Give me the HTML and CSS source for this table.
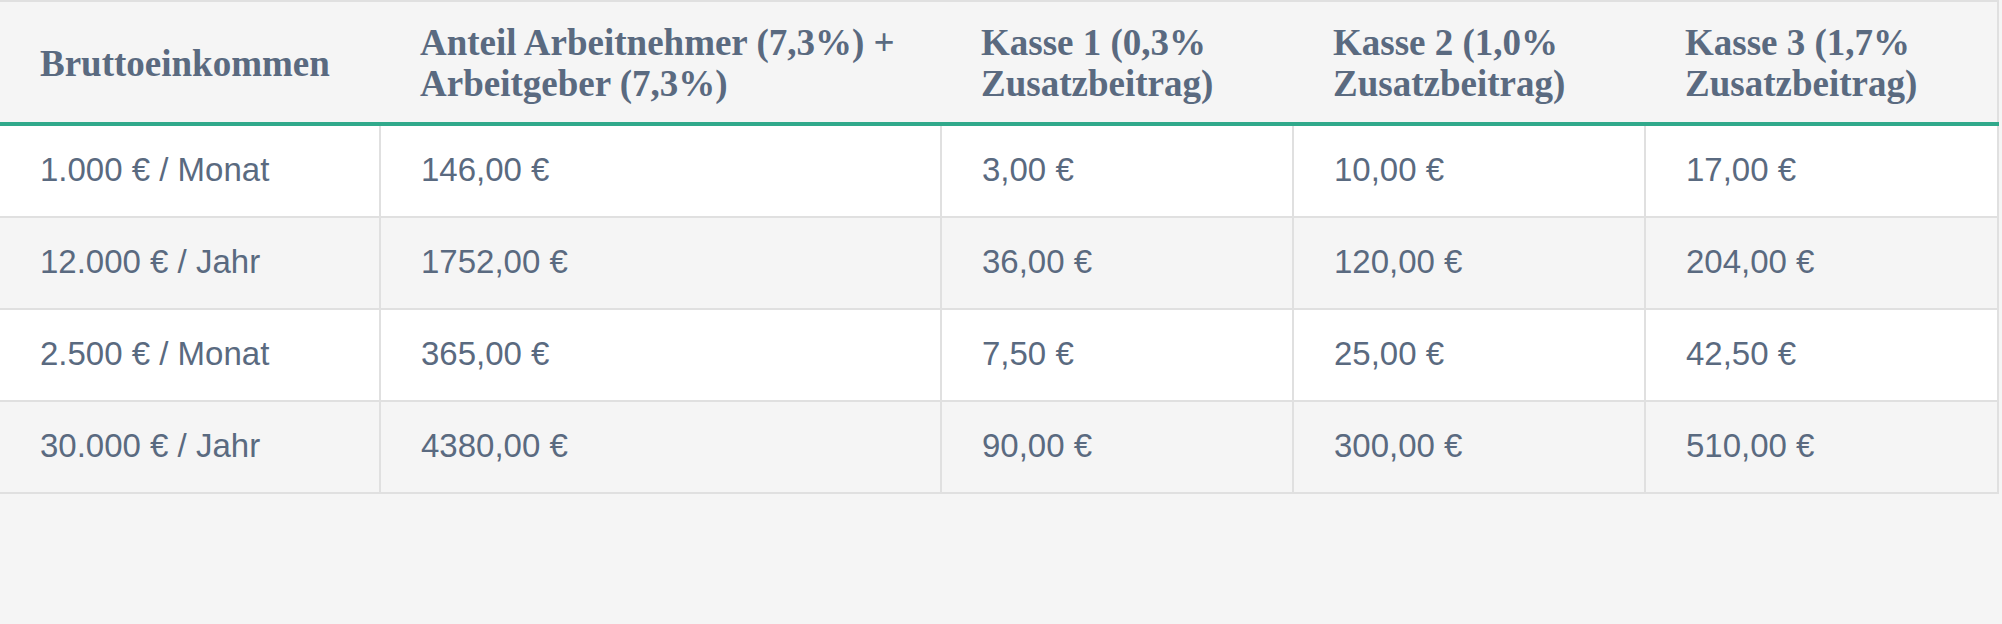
FILE: index.html
```html
<!DOCTYPE html>
<html lang="de">
<head>
<meta charset="utf-8">
<title>Beiträge</title>
<link rel="stylesheet" href="styles.css">
</head>
<body>
<table class="beitrag">
  <colgroup>
    <col class="c1"><col class="c2"><col class="c3"><col class="c4"><col class="c5">
  </colgroup>
  <thead>
    <tr>
      <th>Bruttoeinkommen</th>
      <th>Anteil Arbeitnehmer (7,3%) + Arbeitgeber (7,3%)</th>
      <th>Kasse 1 (0,3% Zusatzbeitrag)</th>
      <th>Kasse 2 (1,0% Zusatzbeitrag)</th>
      <th>Kasse 3 (1,7% Zusatzbeitrag)</th>
    </tr>
  </thead>
  <tbody>
    <tr><td>1.000 € / Monat</td><td>146,00 €</td><td>3,00 €</td><td>10,00 €</td><td>17,00 €</td></tr>
    <tr><td>12.000 € / Jahr</td><td>1752,00 €</td><td>36,00 €</td><td>120,00 €</td><td>204,00 €</td></tr>
    <tr><td>2.500 € / Monat</td><td>365,00 €</td><td>7,50 €</td><td>25,00 €</td><td>42,50 €</td></tr>
    <tr><td>30.000 € / Jahr</td><td>4380,00 €</td><td>90,00 €</td><td>300,00 €</td><td>510,00 €</td></tr>
  </tbody>
</table>
</body>
</html>
```
FILE: styles.css
```css
html, body {
  margin: 0;
  padding: 0;
  background: #f5f5f5;
}
body {
  width: 2002px;
  height: 624px;
  overflow: hidden;
}
.beitrag {
  border-collapse: collapse;
  table-layout: fixed;
  width: 1998px;
  color: #5a6a80;
}
.c1 { width: 380px; }
.c2 { width: 561px; }
.c3 { width: 352px; }
.c4 { width: 352px; }
.c5 { width: 353px; }
.beitrag th {
  font-family: "Liberation Serif", "Times New Roman", serif;
  font-weight: bold;
  font-size: 37px;
  line-height: 41px;
  text-align: left;
  vertical-align: middle;
  background: #f5f5f5;
  height: 82px;
  padding: 20px 30px 18px 40px;
  border-top: 2px solid #e0e0e0;
  border-bottom: 4px solid #30a98b;
}
.beitrag th:last-child {
  border-right: 2px solid #e0e0e0;
}
.beitrag td {
  font-family: "Liberation Sans", Arial, sans-serif;
  font-size: 33px;
  line-height: 36px;
  height: 36px;
  padding: 26px 30px 28px 40px;
  vertical-align: middle;
  border-bottom: 2px solid #e0e0e0;
  border-left: 2px solid #e0e0e0;
  border-right: 2px solid #e0e0e0;
}
.beitrag td:first-child {
  border-left: none;
}
.beitrag tbody tr:nth-child(odd) td {
  background: #ffffff;
}
.beitrag tbody tr:nth-child(even) td {
  background: #f5f5f5;
}
```
